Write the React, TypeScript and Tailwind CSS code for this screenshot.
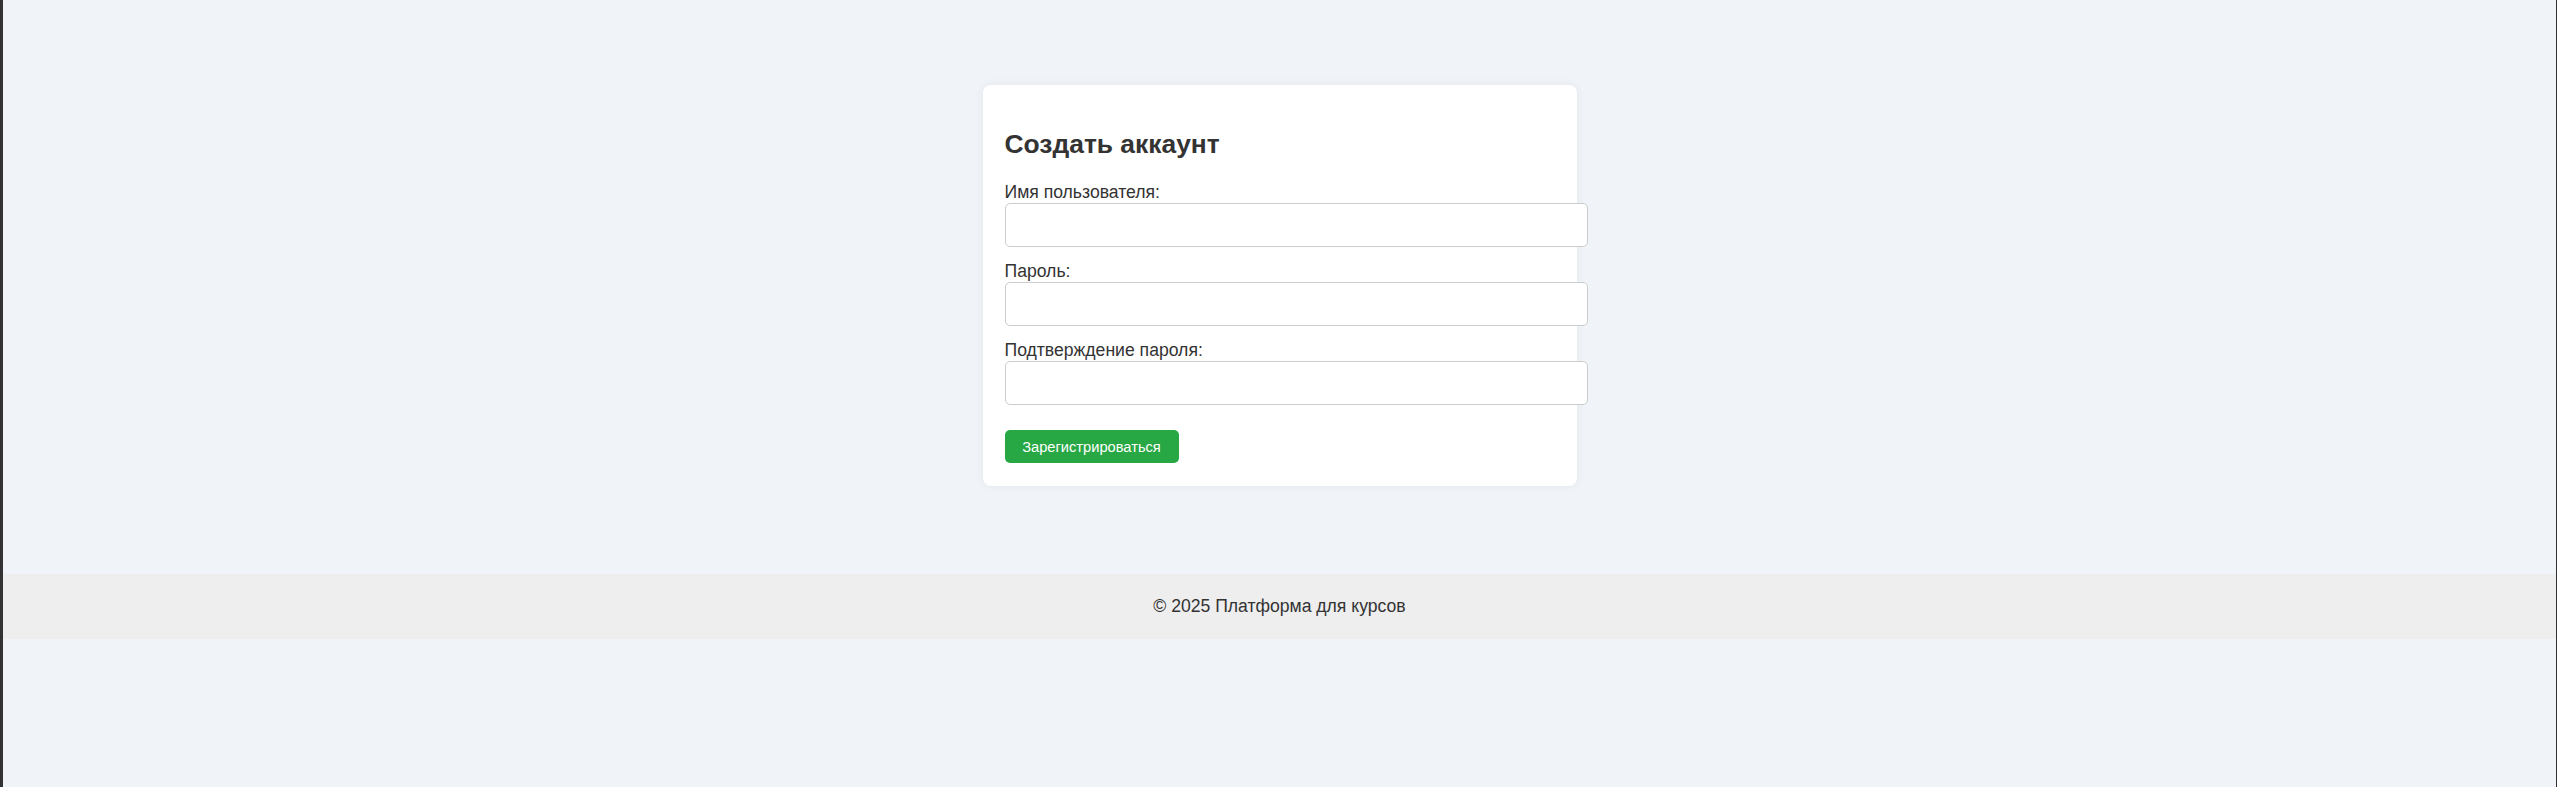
import React from "react";

const inputCls =
  "mt-[1px] w-[583px] h-[44px] border border-[#cccccc] rounded-[5px] bg-white px-[11px] text-[17.6px] outline-none";

export default function App() {
  return (
    <div
      className="min-h-screen w-full bg-[#f0f4f8] border-l-[3px] border-r border-[#333333] text-[#333333]"
      style={{ fontFamily: '"Liberation Sans", Arial, sans-serif' }}
    >
      <main className="flex justify-center pt-[85px] pb-[88px]">
        <div className="w-[594px] bg-white rounded-[8px] shadow-[0_0_10px_rgba(0,0,0,0.06)] px-[22px] pb-[23px] pt-[44px]">
          <h2 className="text-[26.4px] font-bold leading-[30px] m-0">Создать аккаунт</h2>
          <form className="flex flex-col mt-[23px]" onSubmit={(e) => e.preventDefault()}>
            <label className="block text-[17.6px] leading-[20px]">Имя пользователя:</label>
            <input type="text" className={inputCls} />
            <label className="block mt-[14px] text-[17.6px] leading-[20px]">Пароль:</label>
            <input type="password" className={inputCls} />
            <label className="block mt-[14px] text-[17.6px] leading-[20px]">Подтверждение пароля:</label>
            <input type="password" className={inputCls} />
            <div className="mt-[25px]">
              <button
                type="submit"
                className="h-[33px] w-[174px] bg-[#28a745] text-white rounded-[5px] text-[14.67px] flex items-center justify-center"
              >
                Зарегистрироваться
              </button>
            </div>
          </form>
        </div>
      </main>
      <footer className="h-[65px] bg-[#eeeeee] flex items-center justify-center text-[17.6px] text-[#333333]">
        © 2025 Платформа для курсов
      </footer>
    </div>
  );
}
